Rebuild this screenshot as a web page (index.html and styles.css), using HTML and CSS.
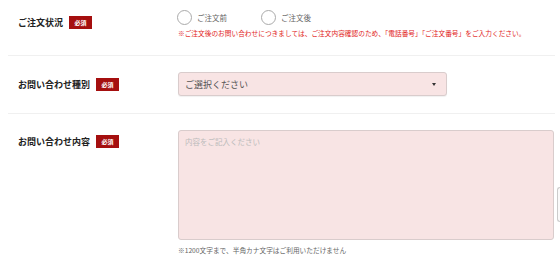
FILE: index.html
```html
<!DOCTYPE html>
<html>
<head>
	<title>お問い合わせ</title>
	<link rel="stylesheet" href="styles.css">
</head>
<body>
<div class="form">
    <div class="row row-status">
        <div class="label">
            <span>ご注文状況</span>
            <span class="required">必須</span>
        </div>
        <div class="field">
            <div class="radios">
                <label class="radio"><span class="circle"></span>ご注文前</label>
                <label class="radio"><span class="circle"></span>ご注文後</label>
            </div>
            <p class="warn">※ご注文後のお問い合わせにつきましては、ご注文内容確認のため、「電話番号」「ご注文番号」をご入力ください。</p>
        </div>
    </div>

    <div class="row row-type">
        <div class="label">
            <span>お問い合わせ種別</span>
            <span class="required">必須</span>
        </div>
        <div class="field">
            <div class="select">
                <span>ご選択ください</span>
                <span class="arrow"></span>
            </div>
        </div>
    </div>

    <div class="row row-body">
        <div class="label">
            <span>お問い合わせ内容</span>
            <span class="required">必須</span>
        </div>
        <div class="field">
            <div class="textarea">内容をご記入ください</div>
            <p class="note">※1200文字まで、半角カナ文字はご利用いただけません</p>
        </div>
    </div>
</div>
<div class="scroll-thumb"></div>
</body>
</html>
```

FILE: styles.css
```css
* {
	margin: 0;
	padding: 0;
	box-sizing: border-box;
}

body {
	background: #fff;
	font-family: "Noto Sans CJK JP", "Noto Sans", sans-serif;
	color: #222;
	overflow: hidden;
}

.form {
	width: 560px;
}

.row {
	display: flex;
	margin: 0 5px 0 8px;
	border-bottom: 1px solid #f0f0f0;
}

.row:last-child {
	border-bottom: none;
}

.label {
	width: 170px;
	padding-left: 10px;
	display: flex;
	align-items: center;
	gap: 6px;
	font-size: 9px;
	font-weight: bold;
	height: 15px;
}

.required {
	background: #a50f0f;
	color: #fff;
	font-size: 6px;
	font-weight: bold;
	width: 23px;
	height: 13px;
	display: flex;
	align-items: center;
	justify-content: center;
}

.field {
	flex: 1;
}

/* row 1 */
.row-status {
	height: 56px;
	padding-top: 10px;
}

.row-status .label {
	margin-top: 5px;
}

.radios {
	display: flex;
	gap: 34px;
	height: 15px;
	margin-left: -1px;
}

.radio {
	display: flex;
	align-items: center;
	gap: 5px;
	font-size: 7.5px;
	color: #666;
}

.circle {
	width: 15px;
	height: 15px;
	border: 1px solid #aaa;
	border-radius: 50%;
	background: #fff;
}

.warn {
	margin-top: 4px;
	font-size: 6.7px;
	line-height: 9px;
	color: #e2231a;
	white-space: nowrap;
}

/* row 2 */
.row-type {
	height: 58px;
	padding-top: 16px;
}

.row-type .label {
	margin-top: 5px;
}

.select {
	width: 269px;
	height: 24px;
	background: #f8e4e4;
	border: 1px solid #d9cccc;
	border-radius: 3px;
	display: flex;
	align-items: center;
	justify-content: space-between;
	padding: 0 10px 0 6px;
	font-size: 9px;
	color: #555;
	box-shadow: 0 1px 1px rgba(0, 0, 0, 0.06);
}

.arrow {
	width: 0;
	height: 0;
	border-left: 2.5px solid transparent;
	border-right: 2.5px solid transparent;
	border-top: 3px solid #333;
}

/* row 3 */
.row-body {
	padding-top: 16px;
}

.row-body .label {
	margin-top: 4px;
}

.textarea {
	width: 376px;
	height: 110px;
	background: #f8e4e4;
	border: 1px solid #d9cccc;
	border-radius: 3px;
	padding: 5px 6px;
	font-size: 7.5px;
	color: #bbb;
}

.note {
	margin-top: 5px;
	font-size: 6.7px;
	color: #666;
	white-space: nowrap;
}

.scroll-thumb {
	position: fixed;
	right: 0;
	top: 187px;
	width: 3px;
	height: 35px;
	border: 1px solid #ccc;
	border-right: none;
	border-radius: 3px 0 0 3px;
	background: #fafafa;
}
```
